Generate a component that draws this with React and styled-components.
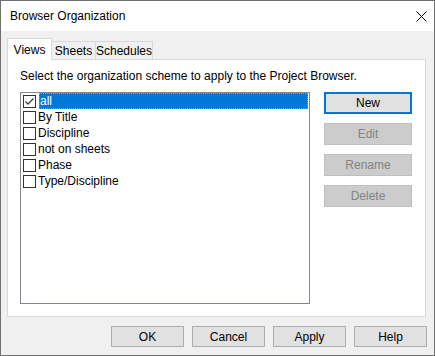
import React, { useState } from "react";
import styled, { createGlobalStyle } from "styled-components";

const GlobalStyle = createGlobalStyle`
  html, body {
    margin: 0;
    padding: 0;
    background: #ffffff;
  }
  * {
    box-sizing: border-box;
  }
`;

const schemes = [
  { name: "all", checked: true },
  { name: "By Title", checked: false },
  { name: "Discipline", checked: false },
  { name: "not on sheets", checked: false },
  { name: "Phase", checked: false },
  { name: "Type/Discipline", checked: false },
];

const tabs = [
  { title: "Views", width: 45 },
  { title: "Sheets", width: 45 },
  { title: "Schedules", width: 58 },
];

const sideButtons = [
  { label: "New", primary: true },
  { label: "Edit", disabled: true },
  { label: "Rename", disabled: true },
  { label: "Delete", disabled: true },
];

const footerButtons = ["OK", "Cancel", "Apply", "Help"];

const CloseIcon = () => (
  <svg width="11" height="11" viewBox="0 0 11 11">
    <path d="M0.5 0.5 L10.5 10.5 M10.5 0.5 L0.5 10.5" stroke="#000" strokeWidth="1" fill="none" />
  </svg>
);

const CheckMark = () => (
  <svg width="11" height="11" viewBox="0 0 11 11">
    <path d="M1.5 5.5 L4 8 L9.5 2.5" stroke="#3c3c3c" strokeWidth="1.3" fill="none" />
  </svg>
);

const App = () => {
  const [active, setActive] = useState("Views");
  const [selected, setSelected] = useState(0);

  return (
    <>
      <GlobalStyle />
      <Window>
        <TitleBar>
          <Title>Browser Organization</Title>
          <CloseButton>
            <CloseIcon />
          </CloseButton>
        </TitleBar>
        <Body>
          <TabStrip>
            {tabs.map((tab) => (
              <Tab
                key={tab.title}
                $w={tab.width}
                $active={active === tab.title}
                onClick={() => setActive(tab.title)}
              >
                {tab.title}
              </Tab>
            ))}
          </TabStrip>
          <Panel>
            <Instruction>
              Select the organization scheme to apply to the Project Browser.
            </Instruction>
            <Content>
              <ListBox>
                {schemes.map((item, i) => (
                  <Row key={item.name} onClick={() => setSelected(i)}>
                    <CheckBox>{item.checked && <CheckMark />}</CheckBox>
                    <RowLabel $selected={selected === i}>{item.name}</RowLabel>
                  </Row>
                ))}
              </ListBox>
              <SideButtons>
                {sideButtons.map((b) => (
                  <SideButton key={b.label} $primary={b.primary} disabled={b.disabled}>
                    {b.label}
                  </SideButton>
                ))}
              </SideButtons>
            </Content>
          </Panel>
        </Body>
        <Footer>
          {footerButtons.map((label) => (
            <FooterButton key={label}>{label}</FooterButton>
          ))}
        </Footer>
      </Window>
    </>
  );
};

const Window = styled.div`
  width: 435px;
  height: 356px;
  border: 1px solid #6f6f6f;
  background-color: #f0f0f0;
  display: flex;
  flex-direction: column;
  font-family: "Liberation Sans", Arial, sans-serif;
  font-size: 12px;
  color: #000;
`;

const TitleBar = styled.div`
  height: 30px;
  flex-shrink: 0;
  background-color: #ffffff;
  display: flex;
  align-items: center;
  justify-content: space-between;
  padding: 0 7px 0 9px;
`;

const Title = styled.span`
  font-size: 12px;
  line-height: 15px;
  margin-top: 1px;
`;

const CloseButton = styled.div`
  width: 11px;
  height: 11px;
  display: flex;
  margin-top: 1px;
`;

const Body = styled.div`
  display: flex;
  flex-direction: column;
  padding: 7px 8px 0 6px;
`;

const TabStrip = styled.div`
  height: 21px;
  display: flex;
  align-items: flex-end;
`;

const Tab = styled.div`
  width: ${(p) => p.$w}px;
  height: ${(p) => (p.$active ? 22 : 18)}px;
  margin-bottom: ${(p) => (p.$active ? -1 : 0)}px;
  margin-left: ${(p) => (p.$active ? 0 : -1)}px;
  position: relative;
  z-index: ${(p) => (p.$active ? 2 : 1)};
  background-color: ${(p) => (p.$active ? "#ffffff" : "#f0f0f0")};
  border: 1px solid #d9d9d9;
  border-bottom: none;
  display: flex;
  justify-content: center;
  padding-top: ${(p) => (p.$active ? 4 : 2)}px;
  line-height: 15px;
  white-space: nowrap;
  cursor: default;

  &:first-child {
    margin-left: 0;
  }
`;

const Panel = styled.div`
  height: 258px;
  background-color: #ffffff;
  border: 1px solid #d9d9d9;
  padding: 9px 12px 12px 12px;
  display: flex;
  flex-direction: column;
`;

const Instruction = styled.div`
  line-height: 15px;
  height: 15px;
  margin-bottom: 8px;
`;

const Content = styled.div`
  display: flex;
  gap: 14px;
`;

const ListBox = styled.div`
  width: 290px;
  height: 212px;
  border: 1px solid #828790;
  background-color: #ffffff;
  padding: 0 1px 0 2px;
  display: flex;
  flex-direction: column;
`;

const Row = styled.div`
  height: 16px;
  display: flex;
  align-items: center;
`;

const CheckBox = styled.div`
  width: 13px;
  height: 13px;
  flex-shrink: 0;
  border: 1px solid #333333;
  background-color: #ffffff;
  display: flex;
  align-items: center;
  justify-content: center;
  margin-right: 2px;
`;

const RowLabel = styled.div`
  flex: 1;
  height: 16px;
  line-height: 17px;
  padding-left: ${(p) => (p.$selected ? 1 : 0)}px;
  margin-left: ${(p) => (p.$selected ? 1 : 0)}px;
  color: ${(p) => (p.$selected ? "#ffffff" : "#000000")};
  background-color: ${(p) => (p.$selected ? "#0078d7" : "transparent")};
  outline: ${(p) => (p.$selected ? "1px dotted #f08a24" : "none")};
  outline-offset: -1px;
  white-space: nowrap;
`;

const SideButtons = styled.div`
  display: flex;
  flex-direction: column;
  gap: 9px;
`;

const SideButton = styled.button`
  width: 88px;
  height: 22px;
  padding: 0;
  font-family: inherit;
  font-size: 12px;
  color: #000;
  background-color: #e1e1e1;
  border: ${(p) => (p.$primary ? "2px solid #0078d7" : "1px solid #adadad")};

  &:disabled {
    background-color: #cccccc;
    border-color: #bfbfbf;
    color: #838383;
  }
`;

const Footer = styled.div`
  display: flex;
  justify-content: flex-end;
  gap: 8px;
  padding: 9px 7px 8px 0;
`;

const FooterButton = styled.button`
  width: 73px;
  height: 21px;
  padding: 0;
  font-family: inherit;
  font-size: 12px;
  color: #000;
  background-color: #e1e1e1;
  border: 1px solid #adadad;
`;

export default App;
